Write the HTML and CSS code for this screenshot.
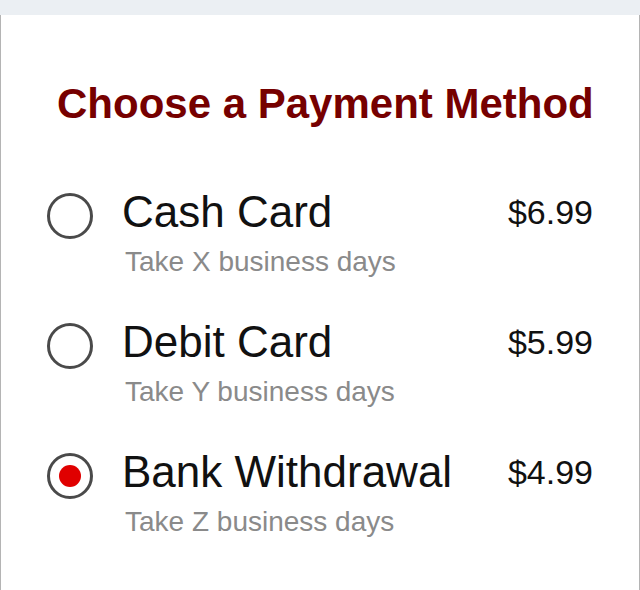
FILE: index.html
```html
<!DOCTYPE html>
<html lang="en">
<head>
<meta charset="utf-8">
<title>Choose a Payment Method</title>
<link rel="stylesheet" href="styles.css">
</head>
<body>
<div class="topbar"></div>
<main class="panel">
  <h1 class="title">Choose a Payment Method</h1>
  <ul class="options">
    <li class="option">
      <span class="radio"></span>
      <div class="info">
        <div class="name">Cash Card</div>
        <div class="sub">Take X business days</div>
      </div>
      <div class="price">$6.99</div>
    </li>
    <li class="option">
      <span class="radio"></span>
      <div class="info">
        <div class="name">Debit Card</div>
        <div class="sub">Take Y business days</div>
      </div>
      <div class="price">$5.99</div>
    </li>
    <li class="option">
      <span class="radio checked"></span>
      <div class="info">
        <div class="name">Bank Withdrawal</div>
        <div class="sub">Take Z business days</div>
      </div>
      <div class="price">$4.99</div>
    </li>
  </ul>
</main>
</body>
</html>
```

FILE: styles.css
```css
html, body {
  margin: 0;
  padding: 0;
  height: 100%;
}
body {
  background: #ebeff3;
  font-family: "Liberation Sans", Arial, Helvetica, sans-serif;
  display: flex;
  flex-direction: column;
}
.topbar {
  height: 15px;
  flex: none;
}
.panel {
  flex: 1;
  background: #fff;
  border-left: 1px solid #b4b4b4;
  border-right: 1px solid #b4b4b4;
  padding: 65px 46px 0 46px;
}
.title {
  margin: 0 0 0 10px;
  font-size: 42px;
  line-height: 48px;
  font-weight: bold;
  color: #760000;
  white-space: nowrap;
}
.options {
  list-style: none;
  margin: 58px 0 0 0;
  padding: 0;
  display: flex;
  flex-direction: column;
  gap: 38px;
}
.option {
  display: flex;
  align-items: flex-start;
}
.radio {
  flex: none;
  box-sizing: border-box;
  width: 46px;
  height: 46px;
  margin-top: 7px;
  border: 3px solid #4a4a4a;
  border-radius: 50%;
  display: flex;
  align-items: center;
  justify-content: center;
}
.radio.checked::after {
  content: "";
  width: 22px;
  height: 22px;
  border-radius: 50%;
  background: #e00000;
}
.info {
  flex: 1;
  margin-left: 29px;
  display: flex;
  flex-direction: column;
  gap: 8px;
}
.name {
  font-size: 44px;
  line-height: 52px;
  color: #111;
}
.sub {
  font-size: 28px;
  line-height: 32px;
  color: #8a8a8a;
  padding-left: 3px;
}
.price {
  flex: none;
  font-size: 34px;
  line-height: 52px;
  color: #111;
}
```
